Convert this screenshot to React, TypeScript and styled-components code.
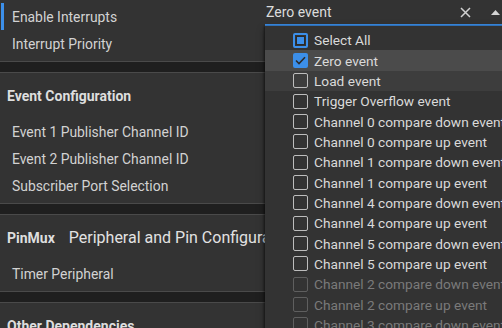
import styled, { createGlobalStyle, css } from "styled-components";

const GlobalStyle = createGlobalStyle`
  html, body {
    margin: 0;
    padding: 0;
    background: #333333;
    overflow: hidden;
  }
  body {
    width: 502px;
    height: 328px;
    font-family: Roboto, "Noto Sans", sans-serif;
    -webkit-font-smoothing: antialiased;
  }
`;

const Page = styled.div`
  position: relative;
  width: 502px;
  height: 328px;
  overflow: hidden;
  background: #1f1f1f;
  display: flex;
  flex-direction: column;
  gap: 10px;
`;

const Section = styled.section<{ $first?: boolean }>`
  background: #333333;
  border-top: 1px solid #4a4a4a;
  border-bottom: 1px solid #4a4a4a;
  padding-bottom: 4px;
  ${(p) =>
    p.$first &&
    css`
      border-top: none;
      padding-top: 3px;
      padding-bottom: 4px;
    `}
`;

const Header = styled.div`
  height: 45px;
  display: flex;
  align-items: center;
  gap: 14px;
  padding-left: 7px;
`;

const HeaderTitle = styled.span`
  font-size: 14px;
  font-weight: 700;
  color: #dedede;
  white-space: nowrap;
`;

const HeaderSub = styled.span`
  font-size: 16px;
  color: #e2e2e2;
  white-space: nowrap;
`;

const Row = styled.div<{ $active?: boolean }>`
  position: relative;
  height: 27px;
  display: grid;
  grid-template-columns: 253px 1fr;
  align-items: center;
  padding-left: 12px;
  ${(p) =>
    p.$active &&
    css`
      &::before {
        content: "";
        position: absolute;
        left: 1px;
        top: 0;
        width: 3px;
        height: 27px;
        background: #3c8fe9;
      }
    `}
`;

const Label = styled.span`
  font-size: 13.9px;
  color: #d2d2d2;
  white-space: nowrap;
`;

const Field = styled.div`
  position: relative;
  align-self: start;
  height: 24px;
  margin-top: -3px;
  display: flex;
  align-items: center;
  border-bottom: 2px solid #3c8fe9;
  padding-left: 1px;
`;

const FieldValue = styled.span`
  flex: 1;
  font-size: 14px;
  color: #dcdcdc;
`;

const FieldIcons = styled.div`
  display: flex;
  align-items: center;
  gap: 20px;
  padding-right: 2px;
  color: #d0d0d0;
`;

const Menu = styled.div`
  position: absolute;
  top: 26px;
  left: 0;
  width: 260px;
  height: 320px;
  background: #333333;
  box-shadow: -1px 0 2px rgba(0, 0, 0, 0.45), 0 3px 8px rgba(0, 0, 0, 0.4);
  padding-top: 4px;
  z-index: 5;
`;

const Option = styled.div<{ $state?: "selected" | "hover"; $disabled?: boolean }>`
  height: 20.35px;
  display: flex;
  align-items: center;
  gap: 6px;
  padding-left: 28px;
  font-size: 13.7px;
  white-space: nowrap;
  color: ${(p) => (p.$disabled ? "#7a7a7a" : "#dadada")};
  background: ${(p) =>
    p.$state === "selected" ? "#4b4b4b" : p.$state === "hover" ? "#3d3d3d" : "transparent"};
`;

const Box = styled.span<{ $kind: "none" | "checked" | "partial"; $disabled?: boolean }>`
  flex: none;
  width: 15px;
  height: 15px;
  box-sizing: border-box;
  border-radius: 2px;
  display: flex;
  align-items: center;
  justify-content: center;
  ${(p) =>
    p.$kind === "none" &&
    css`
      border: 1.5px solid ${p.$disabled ? "#5f5f5f" : "#bdbdbd"};
    `}
  ${(p) =>
    p.$kind === "checked" &&
    css`
      background: #3c8fe9;
    `}
  ${(p) =>
    p.$kind === "partial" &&
    css`
      border: 2px solid #3c8fe9;
      &::after {
        content: "";
        width: 9px;
        height: 9px;
        border: 1px solid #2a2a2a;
        background: #3c8fe9;
        box-sizing: border-box;
      }
    `}
`;

const CloseIcon = () => (
  <svg width="11" height="11" viewBox="0 0 11 11">
    <path d="M1 1 L10 10 M10 1 L1 10" stroke="#d0d0d0" strokeWidth="1.5" fill="none" />
  </svg>
);

const CaretUp = () => (
  <svg width="9" height="5" viewBox="0 0 9 5">
    <path d="M0 5 L4.5 0 L9 5 Z" fill="#d4d4d4" />
  </svg>
);

const CheckMark = () => (
  <svg width="11" height="9" viewBox="0 0 11 9">
    <path d="M1 4.5 L4 7.5 L10 1.2" stroke="#2b2b2b" strokeWidth="1.6" fill="none" />
  </svg>
);

type Opt = { label: string; kind: "none" | "checked" | "partial"; state?: "selected" | "hover"; disabled?: boolean };

const options: Opt[] = [
  { label: "Select All", kind: "partial" },
  { label: "Zero event", kind: "checked", state: "selected" },
  { label: "Load event", kind: "none", state: "hover" },
  { label: "Trigger Overflow event", kind: "none" },
  { label: "Channel 0 compare down event", kind: "none" },
  { label: "Channel 0 compare up event", kind: "none" },
  { label: "Channel 1 compare down event", kind: "none" },
  { label: "Channel 1 compare up event", kind: "none" },
  { label: "Channel 4 compare down event", kind: "none" },
  { label: "Channel 4 compare up event", kind: "none" },
  { label: "Channel 5 compare down event", kind: "none" },
  { label: "Channel 5 compare up event", kind: "none" },
  { label: "Channel 2 compare down event", kind: "none", disabled: true },
  { label: "Channel 2 compare up event", kind: "none", disabled: true },
  { label: "Channel 3 compare down event", kind: "none", disabled: true },
];

export default function App() {
  return (
    <>
      <GlobalStyle />
      <Page>
        <Section $first>
          <Row $active>
            <Label>Enable Interrupts</Label>
            <Field>
              <FieldValue>Zero event</FieldValue>
              <FieldIcons>
                <CloseIcon />
                <CaretUp />
              </FieldIcons>
              <Menu>
                {options.map((o) => (
                  <Option key={o.label} $state={o.state} $disabled={o.disabled}>
                    <Box $kind={o.kind} $disabled={o.disabled}>
                      {o.kind === "checked" && <CheckMark />}
                    </Box>
                    {o.label}
                  </Option>
                ))}
              </Menu>
            </Field>
          </Row>
          <Row>
            <Label>Interrupt Priority</Label>
          </Row>
        </Section>
        <Section>
          <Header>
            <HeaderTitle>Event Configuration</HeaderTitle>
          </Header>
          <Row>
            <Label>Event 1 Publisher Channel ID</Label>
          </Row>
          <Row>
            <Label>Event 2 Publisher Channel ID</Label>
          </Row>
          <Row>
            <Label>Subscriber Port Selection</Label>
          </Row>
        </Section>
        <Section>
          <Header>
            <HeaderTitle>PinMux</HeaderTitle>
            <HeaderSub>Peripheral and Pin Configuration</HeaderSub>
          </Header>
          <Row>
            <Label>Timer Peripheral</Label>
          </Row>
        </Section>
        <Section>
          <Header>
            <HeaderTitle>Other Dependencies</HeaderTitle>
          </Header>
        </Section>
      </Page>
    </>
  );
}
